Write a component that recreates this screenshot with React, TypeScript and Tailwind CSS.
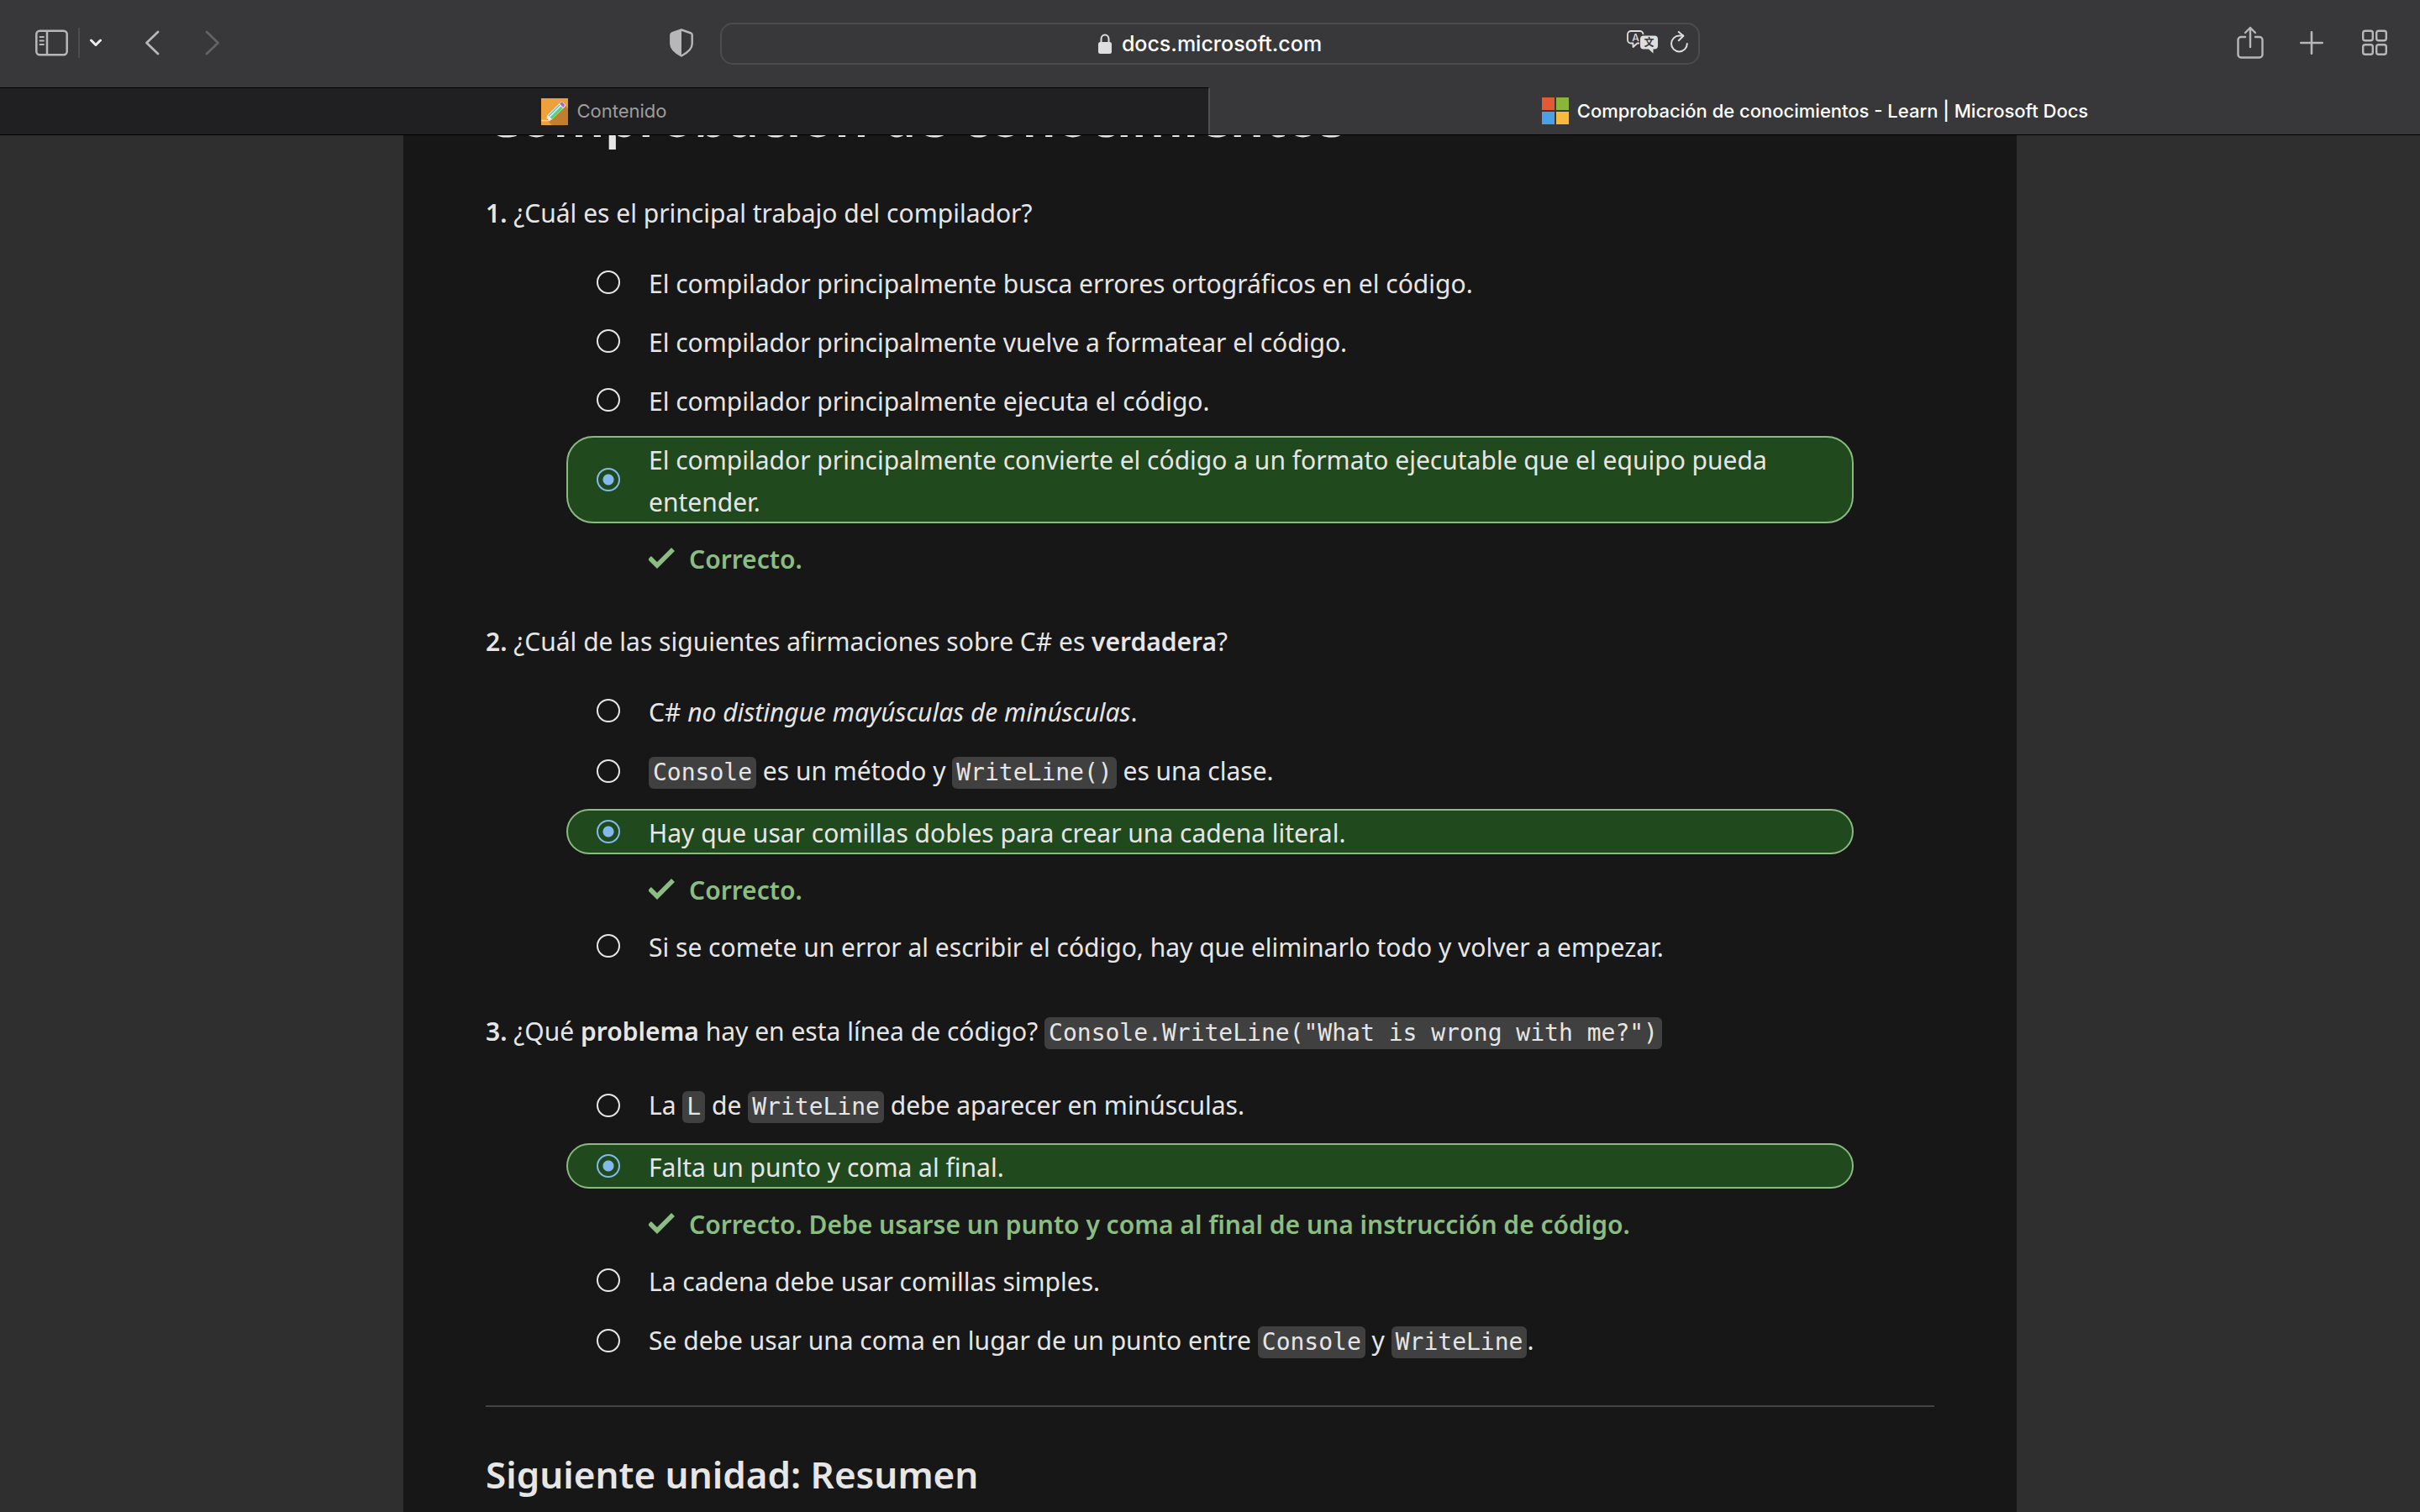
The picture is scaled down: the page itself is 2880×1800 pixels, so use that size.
import type { ReactNode } from 'react';

function Code({ children }: { children: ReactNode }) {
  return (
    <code className="inline-block rounded-md bg-[#404040] px-[5px] font-['DejaVu_Sans_Mono',monospace] text-[28px] leading-[38px]">
      {children}
    </code>
  );
}

function Option({ group, checked = false, tall = false, children }: { group: string; checked?: boolean; tall?: boolean; children: ReactNode }) {
  return (
    <label
      className={`mx-24 flex items-center gap-[34px] rounded-[32px] border-2 pr-[60px] pl-[34px] ${
        checked ? 'border-[#8ab982] bg-[#204a1d]' : 'border-transparent'
      } ${tall ? 'min-h-[58px]' : ''}`}
    >
      <input
        type="radio"
        name={group}
        defaultChecked={checked}
        className="size-7 shrink-0 appearance-none rounded-full border-2 border-[#e6e6e6] checked:border-[#83b9eb] checked:bg-[radial-gradient(circle,#83b9eb_6px,transparent_7px)]"
      />
      <span className={tall ? '' : '-mb-0.5 pt-0.5'}>{children}</span>
    </label>
  );
}

function Feedback({ children }: { children: ReactNode }) {
  return (
    <p className="mx-24 -mb-0.5 flex items-center gap-4 pt-0.5 pl-[98px] font-semibold text-[#8bbd82]">
      <svg viewBox="0 0 32 28" className="h-7 w-8 shrink-0" fill="none" stroke="currentColor" strokeWidth="5.500">
        <path d="M1 12 L10 21 L29 2" />
      </svg>
      {children}
    </p>
  );
}

function Question({ n, title, children }: { n: number; title: ReactNode; children: ReactNode }) {
  return (
    <fieldset className="mb-12 min-w-0">
      <legend className={`mb-[30px] pt-0.5 ${n === 3 ? 'min-h-[56px]' : 'min-h-[52px]'}`}>
        <b className="font-semibold">{n}.</b> {title}
      </legend>
      <div className="flex flex-col gap-4">{children}</div>
    </fieldset>
  );
}

function AddressBar() {
  return (
    <div className="grid h-[50px] grid-cols-[1fr_auto_1fr] items-center rounded-[15px] border-2 border-[#4c4c4e] text-[#dededf]">
      <span />
      <div className="flex items-center gap-3">
        <svg viewBox="0 0 16 24" className="h-6 w-4">
          <rect x="0" y="10" width="16" height="14" rx="2.500" fill="currentColor" />
          <path d="M3.500 11V6.500a4.500 5 0 0 1 9 0V11" fill="none" stroke="currentColor" strokeWidth="2" />
        </svg>
        <input
          type="text"
          aria-label="Dirección"
          defaultValue="docs.microsoft.com"
          className="field-sizing-content bg-transparent text-[25px] leading-[32px] font-medium text-white outline-none"
        />
      </div>
      <div className="flex items-center justify-end gap-[15px] pr-3 pb-1">
        <button aria-label="Traducir">
          <svg viewBox="0 0 37 28" className="h-7 w-[37px]">
            <path
              d="M15 15.500h-2.500L7.500 20v-4.500H5A4 4 0 0 1 1 11.500V5a4 4 0 0 1 4-4h10.500a4 4 0 0 1 4 4"
              fill="none"
              stroke="currentColor"
              strokeWidth="1.800"
              strokeLinejoin="round"
            />
            <path
              d="M20 6.500h13a4 4 0 0 1 4 4v8a4 4 0 0 1-4 4h-1.500V27.500L26 22.500h-6a4 4 0 0 1-4-4v-8a4 4 0 0 1 4-4z"
              fill="currentColor"
            />
            <text x="10.500" y="12.500" textAnchor="middle" fill="currentColor" className="font-['Inter',sans-serif] text-[12px] font-medium">
              A
            </text>
            <text x="26.500" y="19" textAnchor="middle" fill="#38383a" className="font-['Noto_Sans_CJK_SC',sans-serif] text-[12px] font-bold">
              文
            </text>
          </svg>
        </button>
        <button aria-label="Recargar">
          <svg viewBox="0 0 21 26" className="h-[26px] w-[21px]" fill="none" stroke="currentColor" strokeWidth="2" strokeLinecap="round" strokeLinejoin="round">
            <path d="M19.800 15A9.400 9.400 0 1 1 10.400 5.600H15" />
            <path d="M9.800 1l5.600 4.700-5.600 5.500" />
          </svg>
        </button>
      </div>
    </div>
  );
}

function Toolbar() {
  return (
    <header className="grid h-[104px] shrink-0 grid-cols-[1fr_40.5%_1fr] items-center bg-[#38383a] text-[#b7b7b9]">
      <div className="flex items-center pr-8 pb-0.5 pl-[42px]">
        <button aria-label="Barra lateral">
          <svg viewBox="0 0 39 32" className="h-8 w-[39px]" fill="none" stroke="currentColor" strokeWidth="2.500">
            <rect x="1.300" y="1.800" width="36.400" height="28.400" rx="4" />
            <path d="M14 2v28" />
            <path d="M5.500 9h4.500M5.500 13.500h4.500M5.500 18h4.500" strokeWidth="1.800" strokeLinecap="round" />
          </svg>
        </button>
        <span className="ml-3 h-9 w-0.5 bg-[#4d4d4f]" />
        <button aria-label="Más opciones de barra lateral" className="ml-3 text-[#ececec]">
          <svg viewBox="0 0 14 10" className="h-2.5 w-3.5" fill="none" stroke="currentColor" strokeWidth="3" strokeLinecap="round" strokeLinejoin="round">
            <path d="M1.500 2L7 7.500 12.500 2" />
          </svg>
        </button>
        <button aria-label="Atrás" className="ml-[51px]">
          <svg viewBox="0 0 18 30" className="h-[30px] w-[18px]" fill="none" stroke="currentColor" strokeWidth="2.800" strokeLinecap="round" strokeLinejoin="round">
            <path d="M16 2L2.500 15 16 28" />
          </svg>
        </button>
        <button aria-label="Adelante" className="ml-[54px] text-[#636365]">
          <svg viewBox="0 0 18 30" className="h-[30px] w-[18px]" fill="none" stroke="currentColor" strokeWidth="2.800" strokeLinecap="round" strokeLinejoin="round">
            <path d="M2 2l13.500 13L2 28" />
          </svg>
        </button>
        <button aria-label="Informe de privacidad" className="ml-auto">
          <svg viewBox="0 0 28 34" className="h-[34px] w-7">
            <path
              d="M14 1.500L25.500 5.500q1.200.5 1.200 2V18c0 7-6 11-12.700 14.500C7.300 29 1.300 25 1.300 18V7.500q0-1.500 1.200-2z"
              fill="none"
              stroke="currentColor"
              strokeWidth="2.400"
              strokeLinejoin="round"
            />
            <path d="M14 1.500L2.500 5.500q-1.200.5-1.200 2V18c0 7 6 11 12.700 14.500z" fill="currentColor" />
          </svg>
        </button>
      </div>
      <AddressBar />
      <div className="flex items-center justify-end pr-[39px] pb-0.5">
        <button aria-label="Compartir">
          <svg viewBox="0 0 32 40" className="h-10 w-8" fill="none" stroke="currentColor" strokeWidth="2.400" strokeLinecap="round" strokeLinejoin="round">
            <path d="M10 13H5a3.500 3.500 0 0 0-3.500 3.500V34A3.500 3.500 0 0 0 5 37.500h22a3.500 3.500 0 0 0 3.500-3.500V16.500A3.500 3.500 0 0 0 27 13h-5" />
            <path d="M16 25V2M10 8l6-6 6 6" />
          </svg>
        </button>
        <button aria-label="Pestaña nueva" className="ml-[43px]">
          <svg viewBox="0 0 28 28" className="size-7" fill="none" stroke="currentColor" strokeWidth="2.600" strokeLinecap="round">
            <path d="M14 1.300v25.400M1.300 14h25.400" />
          </svg>
        </button>
        <button aria-label="Vista de pestañas" className="ml-[46px]">
          <svg viewBox="0 0 30 32" className="h-8 w-[30px]" fill="none" stroke="currentColor" strokeWidth="2.400">
            <rect x="1.200" y="1.700" width="11.600" height="11.600" rx="2.500" />
            <rect x="17.200" y="1.700" width="11.600" height="11.600" rx="2.500" />
            <rect x="1.200" y="18.200" width="11.600" height="11.600" rx="2.500" />
            <rect x="17.200" y="18.200" width="11.600" height="11.600" rx="2.500" />
          </svg>
        </button>
      </div>
    </header>
  );
}

function PencilIcon() {
  return (
    <svg viewBox="0 0 32 32" className="size-8">
      <rect width="32" height="32" fill="#efa03a" />
      <path d="M7 26L28 8l4 4v20H13z" fill="#c07f2d" />
      <path d="M0 26.500h11" stroke="#f7d9ab" strokeWidth="1.500" />
      <path d="M6 26.500l1.200-6L22.500 5.200q2-2 4 0l1.400 1.400q2 2 0 4L12.500 25.500z" fill="#fff4e0" />
      <path d="M8.500 20.500L21.500 7.500l2 2-13 13z" fill="#4fc0ea" />
      <path d="M10.500 22.500l13-13 2.500 2.500-13 13z" fill="#5fcf7b" />
      <path d="M10 21.800L23 8.800" stroke="#fff" strokeWidth="1.200" />
      <path d="M22 6.500l1.500-1.300q1.200-1 2.400 0L27.500 7q1 1.200 0 2.400L26.200 11z" fill="#a765cf" />
      <path d="M6.200 26.300l.6-2.600 2 2z" fill="#d9822b" />
    </svg>
  );
}

function MicrosoftIcon() {
  return (
    <svg viewBox="0 0 32 32" className="size-8">
      <rect width="15" height="15" fill="#e05a33" />
      <rect x="17" width="15" height="15" fill="#8ab53a" />
      <rect y="17" width="15" height="15" fill="#4ba0e8" />
      <rect x="17" y="17" width="15" height="15" fill="#f5bb41" />
    </svg>
  );
}

function TabBar() {
  return (
    <div role="tablist" className="grid h-[57px] shrink-0 grid-cols-2 border-b border-black bg-[#38383a] text-[22px] font-medium">
      <button
        role="tab"
        aria-selected="false"
        className="flex items-center justify-center gap-2.5 border-t border-r-2 border-t-black border-r-[#505053] bg-[#202022] font-normal text-[#9d9d9f]"
      >
        <PencilIcon />
        Contenido
      </button>
      <button role="tab" aria-selected="true" className="flex items-center justify-center gap-2.5 text-white">
        <MicrosoftIcon />
        Comprobación de conocimientos - Learn | Microsoft Docs
      </button>
    </div>
  );
}

export default function App() {
  return (
    <div className="flex h-screen flex-col overflow-hidden bg-[#2f2f2f] font-['Inter',sans-serif]">
      <Toolbar />
      <TabBar />
      <main className="min-h-0 flex-1 overflow-hidden">
        <article className="mx-auto flow-root min-h-full w-2/3 bg-[#171717] px-[98px] font-['Noto_Sans',sans-serif] text-[30px] leading-[50px] text-[#e6e6e6]">
          <h1 className="-mt-[62px] mb-12 text-[64px] leading-[80px] font-semibold">Comprobación de conocimientos</h1>
          <Question n={1} title="¿Cuál es el principal trabajo del compilador?">
            <Option group="q1">El compilador principalmente busca errores ortográficos en el código.</Option>
            <Option group="q1">El compilador principalmente vuelve a formatear el código.</Option>
            <Option group="q1">El compilador principalmente ejecuta el código.</Option>
            <Option group="q1" checked>
              El compilador principalmente convierte el código a un formato ejecutable que el equipo pueda entender.
            </Option>
            <Feedback>Correcto.</Feedback>
          </Question>
          <Question
            n={2}
            title={
              <>
                ¿Cuál de las siguientes afirmaciones sobre C# es <b className="font-semibold">verdadera</b>?
              </>
            }
          >
            <Option group="q2">
              C# <em>no distingue mayúsculas de minúsculas</em>.
            </Option>
            <Option group="q2" tall>
              <Code>Console</Code> es un método y <Code>WriteLine()</Code> es una clase.
            </Option>
            <Option group="q2" checked>
              Hay que usar comillas dobles para crear una cadena literal.
            </Option>
            <Feedback>Correcto.</Feedback>
            <Option group="q2">Si se comete un error al escribir el código, hay que eliminarlo todo y volver a empezar.</Option>
          </Question>
          <Question
            n={3}
            title={
              <>
                ¿Qué <b className="font-semibold">problema</b> hay en esta línea de código?{' '}
                <Code>Console.WriteLine("What is wrong with me?")</Code>
              </>
            }
          >
            <Option group="q3" tall>
              La <Code>L</Code> de <Code>WriteLine</Code> debe aparecer en minúsculas.
            </Option>
            <Option group="q3" checked>
              Falta un punto y coma al final.
            </Option>
            <Feedback>Correcto. Debe usarse un punto y coma al final de una instrucción de código.</Feedback>
            <Option group="q3">La cadena debe usar comillas simples.</Option>
            <Option group="q3" tall>
              Se debe usar una coma en lugar de un punto entre <Code>Console</Code> y <Code>WriteLine</Code>.
            </Option>
          </Question>
          <hr className="border-t-2 border-[#444444]" />
          <h2 className="mt-12 text-[44px] leading-[64px] font-semibold">Siguiente unidad: Resumen</h2>
        </article>
      </main>
    </div>
  );
}
